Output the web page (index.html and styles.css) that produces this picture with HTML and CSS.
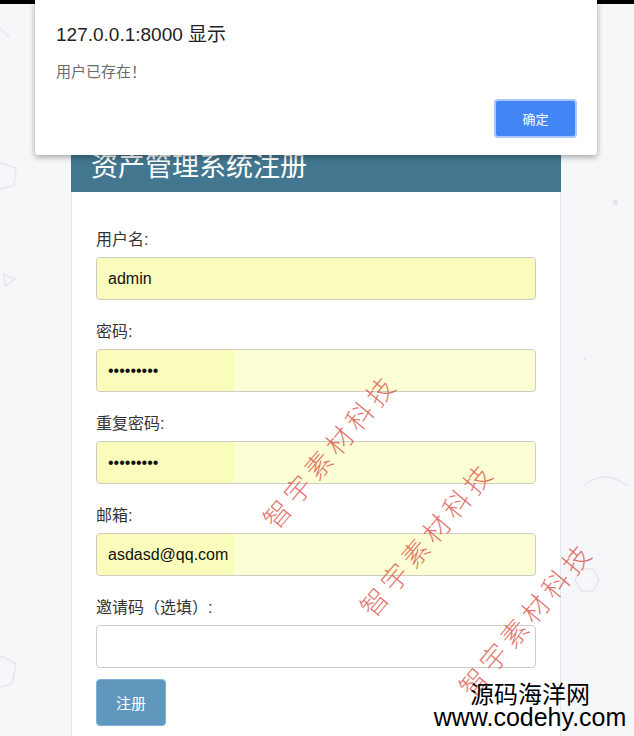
FILE: index.html
```html
<!DOCTYPE html>
<html lang="zh-CN">
<head>
    <meta charset="UTF-8">
    <meta name="viewport" content="width=device-width, initial-scale=1.0">
    <title>资产管理系统注册</title>
    <link rel="stylesheet" href="styles.css">
</head>
<body>
    <!-- 顶部黑条 -->
    <div class="topbar"></div>

    <!-- 背景装饰图形 -->
    <svg class="bg-decor" width="634" height="736" viewBox="0 0 634 736">
        <g fill="none" stroke="#e4e7ec" stroke-width="1.5">
            <line x1="0" y1="28" x2="10" y2="38"/>
            <polygon points="-2,162 16,168 14,186 -4,190 -10,174"/>
            <polygon points="3,274 15,279 6,286"/>
            <path d="M583 486 Q605 468 627 486"/>
            <polygon points="581,569 593,569 599,580 593,591 581,591 575,580"/>
            <polygon points="2,656 16,664 12,684 -4,688 -8,668"/>
        </g>
        <rect x="613" y="200" width="5" height="5" fill="#e6e8ec"/>
        <circle cx="585" cy="359" r="2" fill="#e8eaee"/>
    </svg>

    <!-- 注册面板 -->
    <div class="page">
        <div class="panel">
            <div class="panel-heading">
                <h2>资产管理系统注册</h2>
            </div>
            <div class="panel-body">
                <form>
                    <div class="form-group">
                        <label>用户名:</label>
                        <input class="form-control autofill" type="text" value="admin">
                    </div>
                    <div class="form-group">
                        <label>密码:</label>
                        <input class="form-control autofill-split" type="password" value="123456789">
                    </div>
                    <div class="form-group">
                        <label>重复密码:</label>
                        <input class="form-control autofill-split" type="password" value="123456789">
                    </div>
                    <div class="form-group">
                        <label>邮箱:</label>
                        <input class="form-control autofill-split" type="text" value="asdasd@qq.com">
                    </div>
                    <div class="form-group">
                        <label>邀请码（选填）:</label>
                        <input class="form-control" type="text">
                    </div>
                    <button class="btn-register" type="button">注册</button>
                </form>
            </div>
        </div>
    </div>

    <!-- 浏览器弹窗 -->
    <div class="dialog">
        <div class="dialog-title">127.0.0.1:8000 显示</div>
        <div class="dialog-msg">用户已存在！</div>
        <div class="dialog-actions">
            <button class="btn-ok" type="button">确定</button>
        </div>
    </div>

    <!-- 水印 -->
    <div class="watermark wm1">智宇素材科技</div>
    <div class="watermark wm2">智宇素材科技</div>
    <div class="watermark wm3">智宇素材科技</div>

    <div class="site-logo">
        <div class="logo-cn">源码海洋网</div>
        <div class="logo-en">www.codehy.com</div>
    </div>
</body>
</html>
```

FILE: styles.css
```css
html, body
{
    margin: 0px;
    padding: 0px;
    overflow: hidden;   /* 页面比窗口高，隐藏滚动条 */
}

body
{
    background-color: #f6f7f9;
    font-family: "Liberation Sans", "Noto Sans CJK SC", sans-serif;
    color: #333;
    position: relative;
    height: 736px;
}

/* 顶部黑条 */
.topbar
{
    height: 4px;
    background-color: #000;
}

.bg-decor
{
    position: absolute;
    left: 0px;
    top: 0px;
}

/* 居中容器 */
.page
{
    position: relative;
    display: flex;
    justify-content: center;
    padding: 124px 2px 0px 0px;
}

.panel
{
    width: 490px;
    background-color: #fff;
    border: 1px solid #e2e5e9;
    border-top: none;
    box-sizing: border-box;
}

.panel-heading
{
    background-color: #43778f;
    margin: 0px -1px;
    padding: 20px 20px 10px 20px;
}

.panel-heading h2
{
    margin: 0px;
    font-size: 27px;
    line-height: 34px;
    font-weight: normal;
    color: #fff;
    font-family: "Noto Sans CJK SC", sans-serif;
}

.panel-body
{
    padding: 38px 24px 30px 24px;
}

.form-group
{
    margin-bottom: 22px;
}

.form-group label
{
    display: block;
    font-family: "Liberation Sans", "Noto Sans CJK SC", sans-serif;
    font-size: 16px;
    line-height: 20px;
    margin-bottom: 7px;
    color: #333;
}

.form-control
{
    display: block;
    width: 100%;
    height: 43px;
    box-sizing: border-box;
    border: 1px solid #cdcdc4;
    border-radius: 4px;
    padding: 0px 11px;
    font-family: "Liberation Sans", sans-serif;
    font-size: 16px;
    color: #111;
    background-color: #fff;
    outline: none;
}

/* 浏览器自动填充的黄色背景 */
.autofill
{
    background-color: #f9fcbd;
}

.autofill-split
{
    background: linear-gradient(to right, #f9fcbb 137px, #fcfed3 137px);
}

.form-group:last-of-type
{
    margin-bottom: 11px;
}

.btn-register
{
    width: 70px;
    height: 47px;
    background-color: #5f98bc;
    border: 1px solid #7fb0e0;
    border-radius: 4px;
    color: #fff;
    font-family: "Noto Sans CJK SC", sans-serif;
    font-size: 15px;
}

/* 弹窗 */
.dialog
{
    position: absolute;
    left: 35px;
    top: 0px;
    width: 562px;
    height: 155px;
    box-sizing: border-box;
    background-color: #fff;
    border-radius: 0px 0px 3px 3px;
    box-shadow: 0px 2px 6px rgba(0, 0, 0, 0.35);
    padding: 24px 20px 0px 21px;
}

.dialog-title
{
    font-family: "Liberation Sans", "Noto Sans CJK SC", sans-serif;
    font-size: 19px;
    line-height: 22px;
    color: #222;
}

.dialog-msg
{
    margin-top: 15px;
    font-family: "Noto Sans CJK SC", sans-serif;
    font-size: 15px;
    line-height: 20px;
    color: #6b6b6b;
}

.dialog-actions
{
    display: flex;
    justify-content: flex-end;
    margin-top: 18px;
}

.btn-ok
{
    width: 83px;
    height: 39px;
    background-color: #4285f4;
    border: 2px solid #a9c7f8;
    border-radius: 4px;
    color: #fff;
    font-family: "Noto Sans CJK SC", sans-serif;
    font-size: 13px;
}

/* 水印文字 */
.watermark
{
    position: absolute;
    height: 32px;
    line-height: 32px;
    font-family: "Noto Sans CJK SC", sans-serif;
    font-weight: 300;
    font-size: 27px;
    letter-spacing: 5px;
    white-space: nowrap;
    color: rgba(214, 70, 60, 0.75);
    transform-origin: 0px 16px;
    transform: rotate(-50deg);
}

.wm1 { left: 268px; top: 508px; }
.wm2 { left: 365px; top: 596px; }
.wm3 { left: 464px; top: 676px; }

.site-logo
{
    position: absolute;
    left: 426px;
    bottom: 7px;
    width: 208px;
    text-align: center;
    color: #000;
    white-space: nowrap;
}

.logo-cn
{
    font-family: "Noto Sans CJK SC", sans-serif;
    font-size: 24px;
    line-height: 24px;
}

.logo-en
{
    font-family: "Liberation Sans", sans-serif;
    font-size: 25px;
    line-height: 24px;
}
```
